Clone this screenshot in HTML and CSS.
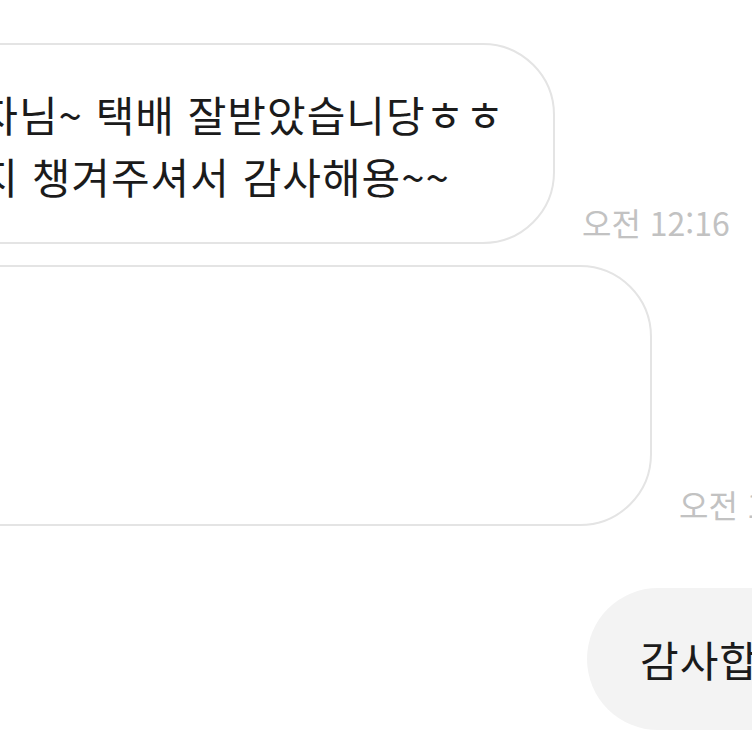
FILE: index.html
```html
<!DOCTYPE html>
<html lang="ko">
<head>
    <meta charset="UTF-8">
    <meta name="viewport" content="width=device-width, initial-scale=1.0">
    <title>채팅</title>
    <link rel="stylesheet" href="styles.css">
</head>
<body>
    <div class="chat">
        <!-- 받은 메시지 (텍스트) -->
        <div class="msg msg-in">
            <div class="bubble bubble-in bubble-text">
                <p class="text">판매자님~ 택배 잘받았습니당ㅎㅎ<br>덤까지 챙겨주셔서 감사해용~~</p>
            </div>
            <span class="time">오전 12:16</span>
        </div>

        <!-- 받은 메시지 (사진) -->
        <div class="msg msg-in msg-photo">
            <div class="bubble bubble-in bubble-photo"></div>
            <span class="time">오전 12:16</span>
        </div>

        <!-- 보낸 메시지 -->
        <div class="msg msg-out">
            <div class="bubble bubble-out">
                <p class="text">감사합니다~!</p>
            </div>
        </div>
    </div>
</body>
</html>
```

FILE: styles.css
```css
/* 기본 설정 */
body {
    margin: 0;
    padding: 0;
    background-color: #fff;
    font-family: "Noto Sans CJK KR", "Noto Sans", sans-serif;
    overflow: hidden;
    width: 752px;
    height: 752px;
}

/* 채팅 목록 */
.chat {
    display: flex;
    flex-direction: column;
    padding-top: 43px;
}

.msg {
    display: flex;
    align-items: flex-end;
}

.msg-in {
    gap: 27px;
}

.msg-photo {
    margin-top: 21px;
}

.msg-out {
    margin-top: 62px;
    padding-left: 587px;
}

/* 말풍선 */
.bubble {
    flex-shrink: 0;
    box-sizing: border-box;
    display: flex;
    align-items: center;
}

.bubble-in {
    margin-left: -200px;
    border: 2px solid #e4e4e4;
    border-radius: 72px;
    background-color: #fff;
}

.bubble-text {
    width: 755px;
    height: 201px;
    padding: 2px 0 0 98px;
}

.bubble-photo {
    width: 852px;
    height: 261px;
}

.bubble-out {
    height: 142px;
    padding: 0 60px 0 53px;
    border-radius: 71px;
    background-color: #f3f3f3;
}

.text {
    margin: 0;
    font-size: 42px;
    letter-spacing: 1px;
    line-height: 62px;
    color: #1b1b1b;
    white-space: nowrap;
}

/* 시간 */
.time {
    flex-shrink: 0;
    margin-bottom: 7px;
    font-size: 32px;
    line-height: 30px;
    color: #c2c2c2;
    white-space: nowrap;
}
```
